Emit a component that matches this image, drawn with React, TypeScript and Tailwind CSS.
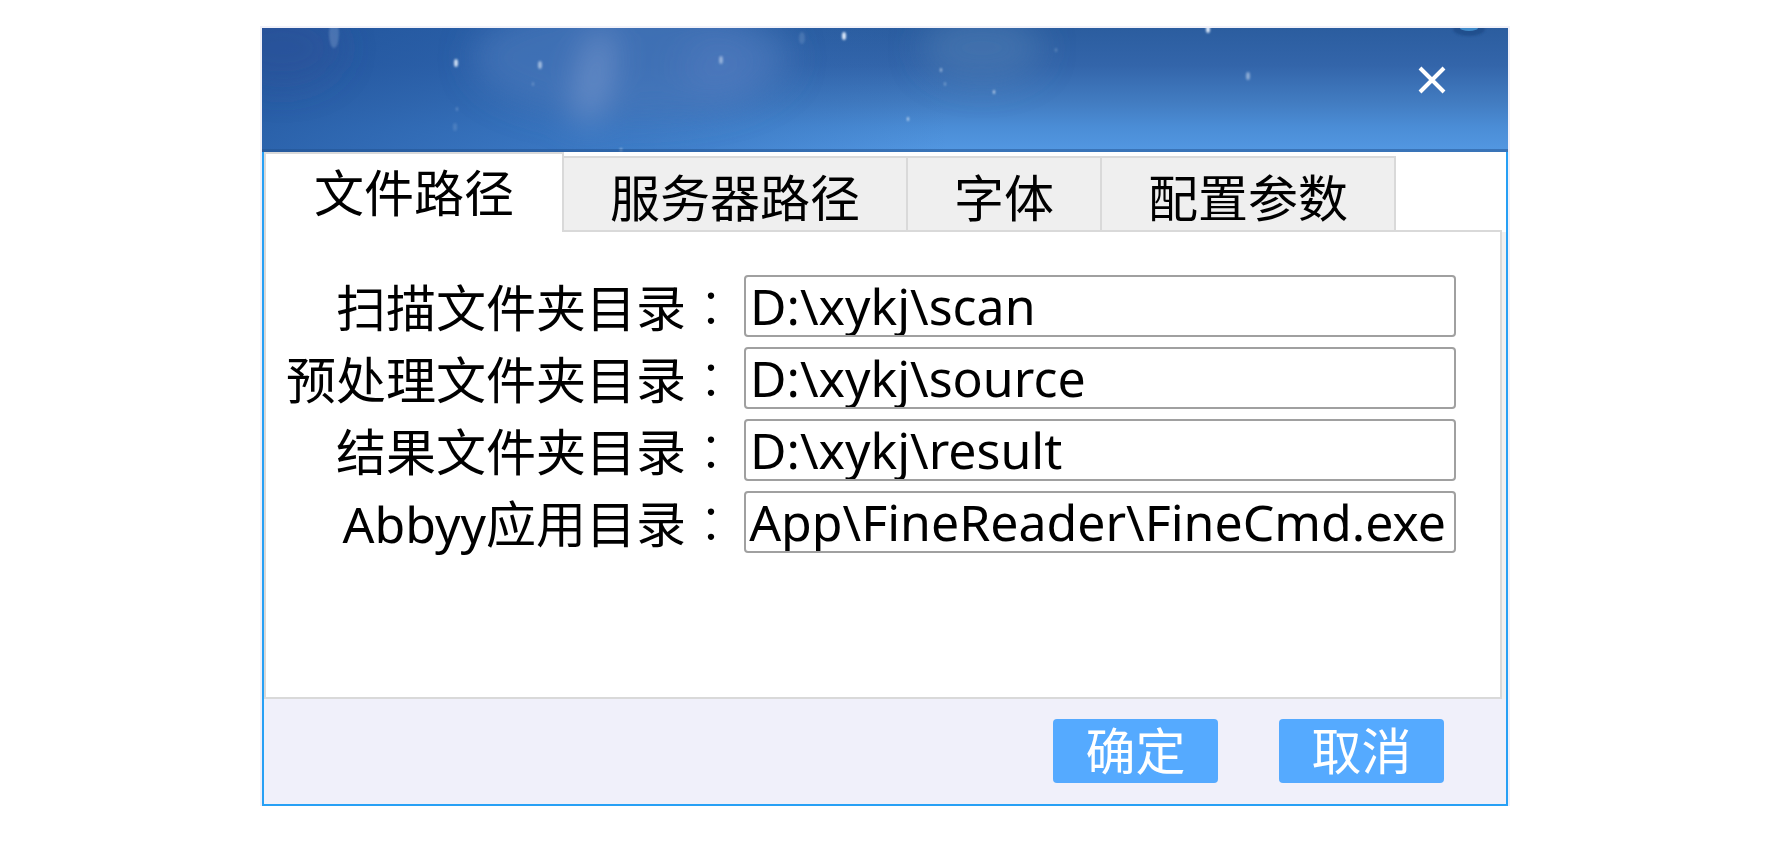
import { useState } from 'react';

interface Field {
  id: string;
  label: string;
  value: string;
  alignEnd?: boolean;
}

const tabs = ['文件路径', '服务器路径', '字体', '配置参数'];

const fields: Field[] = [
  { id: 'scan', label: '扫描文件夹目录', value: 'D:\\xykj\\scan' },
  { id: 'source', label: '预处理文件夹目录', value: 'D:\\xykj\\source' },
  { id: 'result', label: '结果文件夹目录', value: 'D:\\xykj\\result' },
  { id: 'abbyy', label: 'Abbyy应用目录', value: 'App\\FineReader\\FineCmd.exe', alignEnd: true },
];

// x, y, radius, opacity
const stars = [
  [194, 35, 2, 0.9],
  [278, 37, 2, 0.6],
  [271, 56, 1, 0.3],
  [195, 81, 1, 0.3],
  [193, 99, 2, 0.15],
  [359, 122, 1, 0.8],
  [459, 32, 2, 0.5],
  [540, 10, 3, 0.15],
  [582, 8, 2, 1],
  [679, 42, 1, 0.7],
  [683, 56, 1, 0.4],
  [732, 64, 1, 0.9],
  [646, 91, 1, 0.9],
  [794, 22, 1, 0.3],
  [946, 1, 2, 1],
  [986, 48, 2, 0.5],
];

function Sky() {
  return (
    <svg className="absolute inset-0 h-full w-full" viewBox="0 0 1246 124" preserveAspectRatio="none" aria-hidden="true">
      <defs>
        <linearGradient id="sky" x1="0" y1="0" x2="0" y2="1">
          <stop offset="0" stopColor="#2b5d9f" />
          <stop offset="0.3" stopColor="#3365aa" />
          <stop offset="0.6" stopColor="#427cc1" />
          <stop offset="0.8" stopColor="#4b8dd6" />
          <stop offset="1" stopColor="#5398e2" />
        </linearGradient>
        <linearGradient id="shade" x1="0" y1="0" x2="1" y2="0">
          <stop offset="0" stopColor="#1f529b" stopOpacity="0.75" />
          <stop offset="0.25" stopColor="#2a62ae" stopOpacity="0.6" />
          <stop offset="0.55" stopColor="#2a62ae" stopOpacity="0" />
        </linearGradient>
        <filter id="soft" x="-60%" y="-60%" width="220%" height="220%">
          <feGaussianBlur stdDeviation="16" />
        </filter>
        <filter id="glow" x="-200%" y="-200%" width="500%" height="500%">
          <feGaussianBlur stdDeviation="0.8" />
        </filter>
      </defs>
      <rect width="1246" height="124" fill="url(#sky)" />
      <rect width="1246" height="124" fill="url(#shade)" />
      <g filter="url(#soft)">
        <ellipse cx="370" cy="30" rx="160" ry="60" fill="#4c7abc" opacity="0.6" />
        <ellipse cx="332" cy="50" rx="14" ry="50" fill="#7b9bd0" opacity="0.7" transform="rotate(12 332 50)" />
        <ellipse cx="460" cy="40" rx="40" ry="36" fill="#5580c2" opacity="0.4" />
        <ellipse cx="720" cy="20" rx="60" ry="34" fill="#4c79b2" opacity="0.6" />
        <ellipse cx="20" cy="20" rx="60" ry="40" fill="#2c5096" opacity="0.4" />
      </g>
      <ellipse cx="72" cy="6" rx="5" ry="14" fill="#7fa0cf" opacity="0.4" filter="url(#glow)" />
      <ellipse cx="1207" cy="1" rx="16" ry="7" fill="#1d4a86" opacity="0.7" filter="url(#glow)" />
      <ellipse cx="1207" cy="0" rx="9" ry="3" fill="#3f8ac9" />
      <g fill="#dfebfa" filter="url(#glow)">
        {stars.map(([x, y, r, o]) => (
          <ellipse key={`${x}-${y}`} cx={x} cy={y} rx={r} ry={r * 2} opacity={o} />
        ))}
      </g>
      <rect y="121" width="1246" height="3" fill="#1f4f8d" opacity="0.5" />
    </svg>
  );
}

export default function App() {
  const [active, setActive] = useState(0);

  return (
    <main className="bg-white pt-7 pr-px font-['Noto_Sans','Noto_Sans_CJK_SC',sans-serif] text-[50px] leading-[60px] text-black">
      <section
        role="dialog"
        aria-label="设置"
        className="mx-auto w-full max-w-[1246px] bg-[#f0f0fa] outline-2 outline-[#f1f1f9]"
      >
        <header className="relative flex h-[124px] items-center justify-end pr-14">
          <Sky />
          <button type="button" aria-label="关闭" className="relative mb-5 flex h-10 w-10 items-center justify-center text-white">
            <svg className="h-7 w-7" viewBox="0 0 28 28" fill="none" stroke="currentColor" strokeWidth="4">
              <path d="M2 2L26 26M26 2L2 26" />
            </svg>
          </button>
        </header>

        <div className="border-x-2 border-b-2 border-[#27a0f5]">
          <div role="tablist" className="flex h-20 items-end bg-white">
            {tabs.map((tab, i) => (
              <button
                key={tab}
                type="button"
                role="tab"
                aria-selected={active === i}
                onClick={() => setActive(i)}
                className={
                  active === i
                    ? 'h-20 border-2 border-b-0 border-[#d9d9d9] bg-white px-12'
                    : 'h-[76px] border-y-2 border-r-2 border-[#d9d9d9] bg-[#efefef] px-[46px] pt-2'
                }
              >
                {tab}
              </button>
            ))}
            <div className="mr-1 flex-1 self-end border-b-2 border-[#d9d9d9]" />
          </div>

          <div className="bg-[#f0f0f0] pr-1">
            <form className="grid grid-cols-[auto_1fr] gap-x-2 gap-y-[10px] border-x-2 border-b-2 border-[#d9d9d9] bg-white pt-[43px] pr-11 pb-36 pl-5">
              {fields.map((field) => (
                <div key={field.id} className="contents">
                  <label htmlFor={field.id} className="h-[62px] text-right whitespace-nowrap">
                    {field.label}
                    <span className="font-['Noto_Sans_CJK_JP',sans-serif] font-light">：</span>
                  </label>
                  <input
                    id={field.id}
                    type="text"
                    defaultValue={field.value}
                    className={`h-[62px] w-full min-w-0 rounded-[4px] border-2 border-[#a0a0a0] bg-white ${
                      field.alignEnd ? 'pr-2 text-right' : 'px-1'
                    }`}
                  />
                </div>
              ))}
            </form>
          </div>

          <footer className="flex justify-end gap-[61px] bg-[#f0f0fa] pt-5 pr-[62px] pb-[21px] text-white">
            <button type="button" className="h-16 w-[165px] rounded-[4px] bg-[#55aaff]">
              确定
            </button>
            <button type="button" className="h-16 w-[165px] rounded-[4px] bg-[#55aaff]">
              取消
            </button>
          </footer>
        </div>
      </section>
    </main>
  );
}
